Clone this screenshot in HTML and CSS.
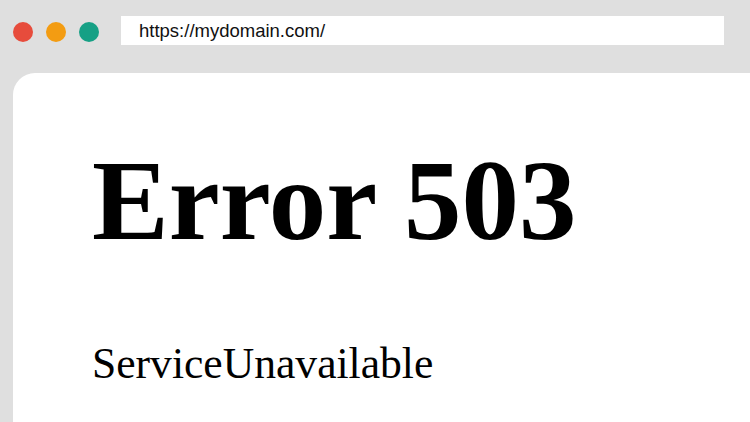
FILE: index.html
```html
<!DOCTYPE html>
<html>
<head>
<meta charset="utf-8">
<link rel="stylesheet" href="styles.css">
</head>
<body>
<div class="window">
  <header class="toolbar">
    <div class="dots">
      <span class="dot dot-red"></span>
      <span class="dot dot-orange"></span>
      <span class="dot dot-teal"></span>
    </div>
    <div class="address">https://mydomain.com/</div>
  </header>
  <main class="content">
    <h1 class="title">Error 503</h1>
    <p class="message">ServiceUnavailable</p>
  </main>
</div>
</body>
</html>
```

FILE: styles.css
```css
html, body {
  margin: 0;
  padding: 0;
  height: 100%;
}
body {
  background: #dfdfdf;
  overflow: hidden;
}
.window {
  display: flex;
  flex-direction: column;
  height: 100%;
}
.toolbar {
  display: flex;
  align-items: flex-start;
  height: 73px;
  padding: 16px 26px 0 13px;
  box-sizing: border-box;
}
.dots {
  display: flex;
  gap: 13px;
  margin-top: 6px;
}
.dot {
  width: 20px;
  height: 20px;
  border-radius: 50%;
}
.dot-red { background: #e74c3c; }
.dot-orange { background: #f39c12; }
.dot-teal { background: #16a085; }
.address {
  flex: 1;
  margin-left: 22px;
  height: 29px;
  background: #ffffff;
  box-sizing: border-box;
  padding-left: 18px;
  font-family: "Liberation Sans", Arial, sans-serif;
  font-size: 18.5px;
  line-height: 29px;
  color: #111111;
}
.content {
  flex: 1;
  margin-left: 13px;
  background: #ffffff;
  border-top-left-radius: 22px;
  padding: 62px 0 0 79px;
  font-family: "Liberation Serif", "Times New Roman", serif;
  color: #000000;
}
.title {
  margin: 0;
  font-size: 115px;
  font-weight: bold;
  line-height: 1.15;
}
.message {
  margin: 71px 0 0 0;
  font-size: 43.6px;
  line-height: 1.15;
}
```
